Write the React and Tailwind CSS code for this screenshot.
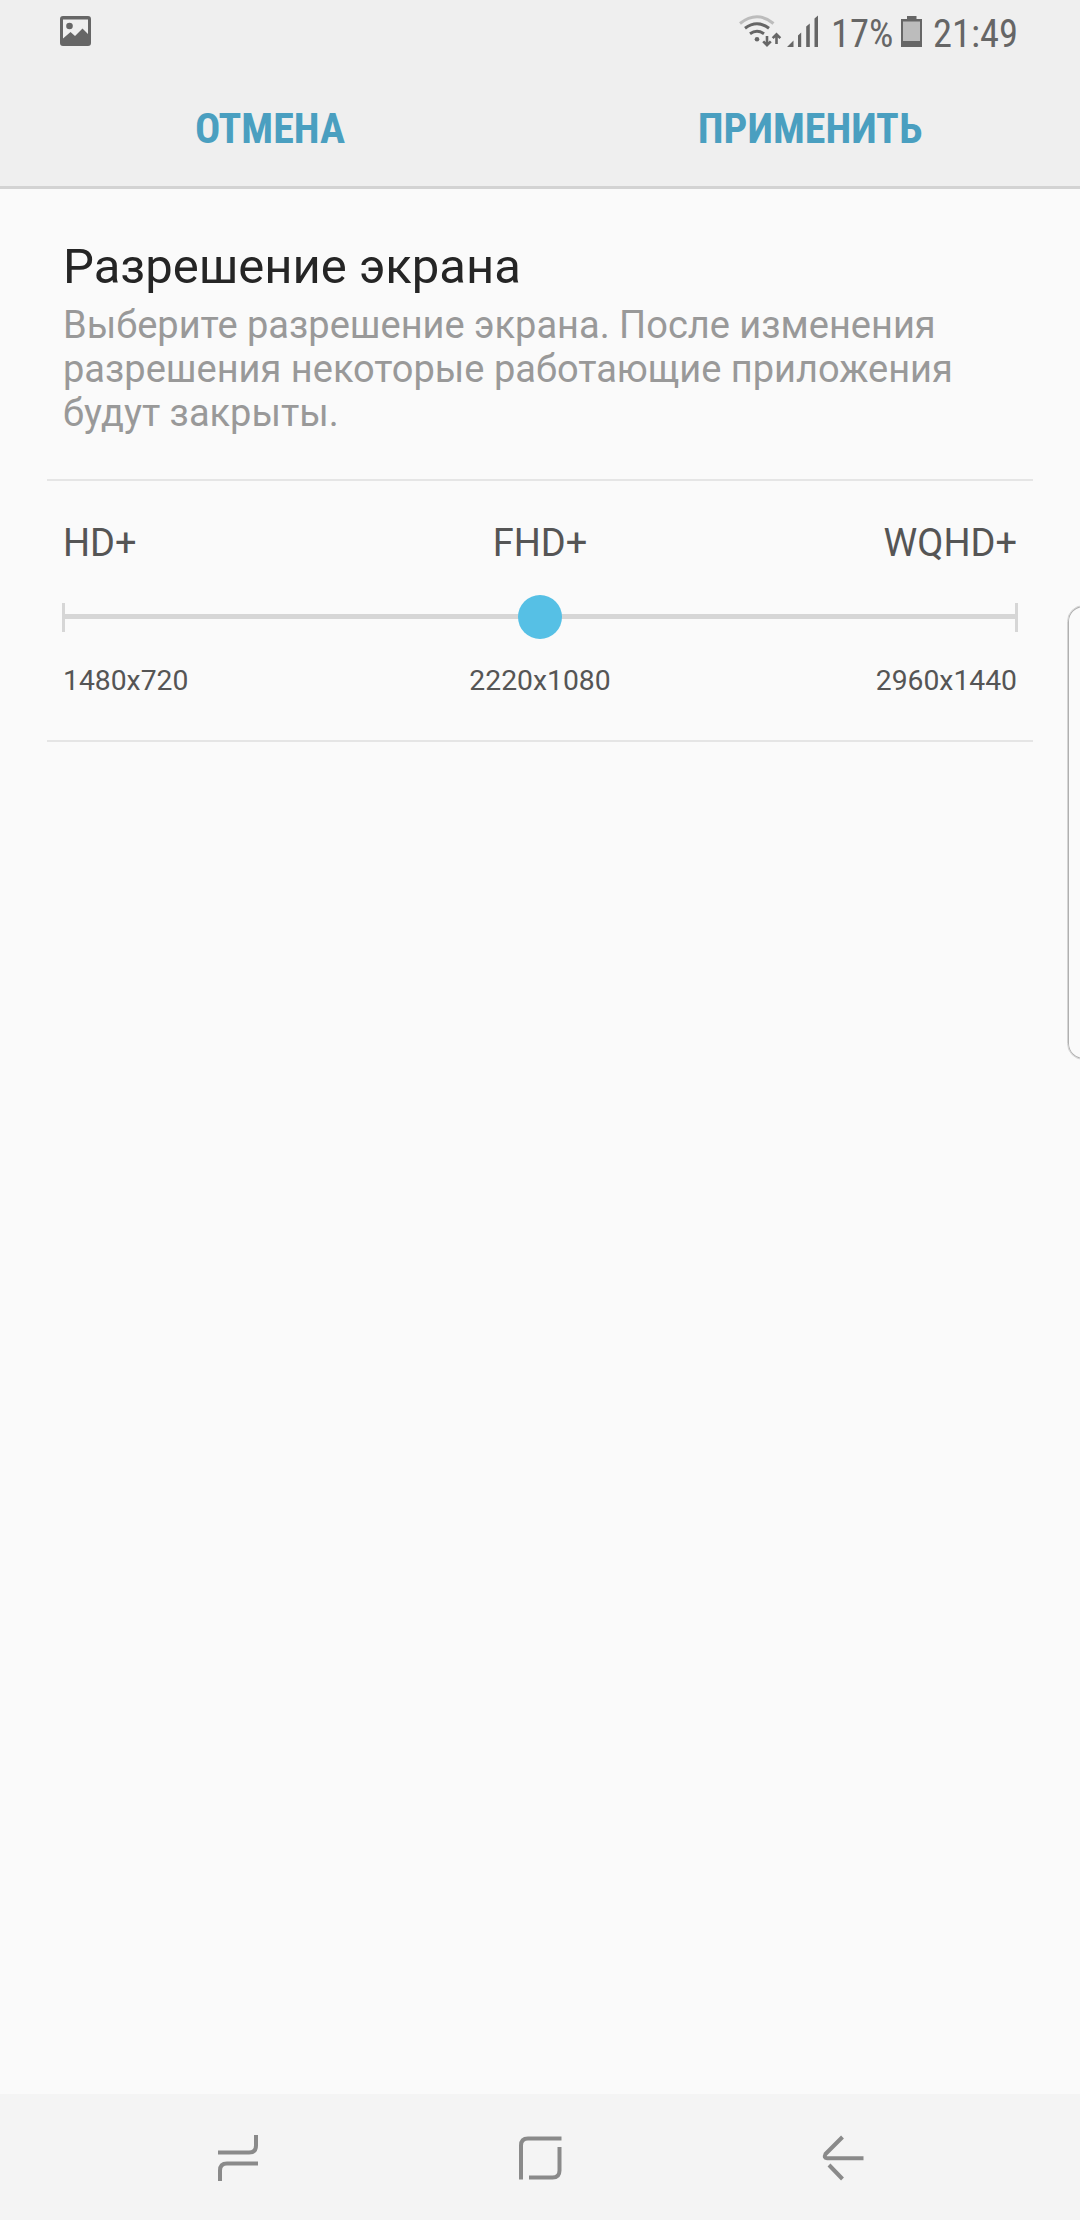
const modes = [
  { name: "HD+", size: "1480x720", align: "text-left" },
  { name: "FHD+", size: "2220x1080", align: "text-center" },
  { name: "WQHD+", size: "2960x1440", align: "text-right" },
];

function StatusBar() {
  return (
    <div className="flex h-[63px] items-start justify-between pl-[60px] pr-[63px] text-[#666666]">
      <svg className="mt-4 h-[30px] w-[31px]" viewBox="0 0 31 30" fill="currentColor">
        <path
          fillRule="evenodd"
          d="M3 0H28A3 3 0 0 1 31 3V27A3 3 0 0 1 28 30H3A3 3 0 0 1 0 27V3A3 3 0 0 1 3 0ZM3 3.500V22.500L10.500 16L15 20L22.500 12.500L28 18V3.500Z"
        />
        <circle cx="9.500" cy="10" r="3.300" />
      </svg>
      <div className="flex items-start">
        <svg className="mt-[14px] h-[34px] w-[80px]" viewBox="739 14 80 34" fill="none" stroke="currentColor">
          <path d="M740 23.500Q757 10 773.500 23.500" stroke="#bcbcbc" strokeWidth="3" />
          <path d="M745 28.300Q757 19.300 769 28.300" strokeWidth="3" />
          <path d="M750 33.800Q757 28.800 764 33.800" strokeWidth="3" />
          <circle cx="757" cy="39.200" r="2.300" fill="currentColor" stroke="none" />
          <path d="M767 36V45M763.200 41.300L767 45.100L770.800 41.300M776.500 44V34.500M772.700 38.200L776.500 34.400L780.300 38.200" strokeWidth="2.600" />
          <path d="M787 47L793.500 40.500V47ZM798 47V35.500L801.200 32.500V47ZM806.200 47V26.500L809.800 23.500V47ZM814.500 47V18.500L818 15.500V47Z" fill="currentColor" stroke="none" />
        </svg>
        <span className="ml-[12px] mt-[11px] w-[61px] whitespace-nowrap font-['Roboto_Condensed',Roboto,sans-serif] text-[38.5px] leading-[45px] [font-stretch:75%]">
          17%
        </span>
        <svg className="ml-[9px] mt-4 h-8 w-[21px]" viewBox="0 0 21 32" fill="currentColor">
          <path d="M6 0H15.500V3H21V31H0V3H6Z" />
          <path d="M2 5.500H19V25H2Z" fill="#bcbcbc" />
        </svg>
        <span className="ml-[11px] mt-[11px] w-[84px] whitespace-nowrap font-['Roboto_Condensed',Roboto,sans-serif] text-[38.5px] leading-[45px] [font-stretch:75%]">
          21:49
        </span>
      </div>
    </div>
  );
}

function Header() {
  return (
    <header className="h-[189px] border-b-[3px] border-[#d3d3d3] bg-[#efefef]">
      <StatusBar />
      <div className="grid h-[123px] grid-cols-2 pt-[38px] font-['Roboto_Condensed',Roboto,sans-serif] text-[42px] font-bold leading-[55px] text-[#4a9fc0] [font-stretch:75%]">
        <button className="flex items-start justify-center">ОТМЕНА</button>
        <button className="flex items-start justify-center">ПРИМЕНИТЬ</button>
      </div>
    </header>
  );
}

function Slider() {
  return (
    <div className="relative mx-[15px] mt-[30px] flex h-[44px] items-center justify-between">
      <div className="h-[29px] w-[3px] bg-[#d6d6d6]" />
      <div className="mb-px h-[5px] flex-1 bg-[#d6d6d6]" />
      <div className="h-[29px] w-[3px] bg-[#d6d6d6]" />
      <div className="absolute left-1/2 top-0 size-11 -translate-x-1/2 rounded-full bg-[#56c0e5]" />
    </div>
  );
}

function NavBar() {
  return (
    <nav className="flex h-[126px] items-center justify-center gap-[242px] bg-[#f4f4f4] text-[#8a8a8a]">
      <svg className="size-[60px]" viewBox="208 2127 60 60" fill="none" stroke="currentColor" strokeWidth="4">
        <path d="M218 2152.500H249Q256 2152.500 256 2145.500V2135M220 2181V2170.500Q220 2163.500 227 2163.500H258" />
      </svg>
      <svg className="size-[60px]" viewBox="510 2127 60 60" fill="none" stroke="currentColor" strokeWidth="4">
        <path d="M521 2179.500V2145.500Q521 2138.500 528 2138.500H561.500M559.500 2147V2170.500Q559.500 2177.500 552.500 2177.500H529" />
      </svg>
      <svg className="size-[60px]" viewBox="812 2127 60 60" fill="none" stroke="currentColor" strokeWidth="4">
        <path d="M842.500 2137L825.500 2154Q823.500 2158.200 827 2158.200H863.500M829 2165L842.500 2179" />
      </svg>
    </nav>
  );
}

export default function App() {
  return (
    <div className="relative flex h-[2220px] w-[1080px] flex-col overflow-hidden bg-[#fafafa] font-[Roboto,sans-serif]">
      <Header />
      <main className="flex-1 px-[47px] pt-[49px]">
        <div className="h-[241px] px-4">
          <h1 className="text-[49px] leading-[57px] text-[#252525]">Разрешение экрана</h1>
          <p className="mt-2 text-[38px] leading-[44px] text-[#999999]">
            Выберите разрешение экрана. После изменения
            <br />
            разрешения некоторые работающие приложения
            <br />
            будут закрыты.
          </p>
        </div>
        <section className="h-[263px] border-y-2 border-[#e5e5e5] pt-10 text-[#555555]">
          <div className="grid grid-cols-3 px-4 text-[38px] leading-[44px]">
            {modes.map((mode) => (
              <span key={mode.name} className={mode.align}>{mode.name}</span>
            ))}
          </div>
          <Slider />
          <div className="mt-[25px] grid grid-cols-3 px-4 text-[28.3px] leading-[33px]">
            {modes.map((mode) => (
              <span key={mode.size} className={mode.align}>{mode.size}</span>
            ))}
          </div>
        </section>
      </main>
      <NavBar />
      {/* edge panel handle */}
      <div className="absolute -right-5 top-[605px] h-[455px] w-[33px] rounded-[18px] border border-[#d4d4d4] inset-ring inset-ring-[#b0b0b0]" />
    </div>
  );
}
